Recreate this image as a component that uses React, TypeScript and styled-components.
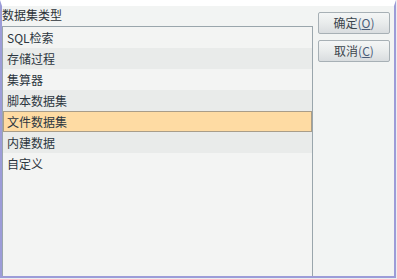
import React from "react";
import styled, { createGlobalStyle } from "styled-components";

const GlobalStyle = createGlobalStyle`
  html, body {
    margin: 0;
    padding: 0;
    background: #ecedf0;
  }
  body {
    font-family: "Noto Sans CJK SC", "Liberation Sans", sans-serif;
  }
`;

const Frame = styled.div`
  box-sizing: border-box;
  width: 396px;
  height: 278px;
  border-left: 2px solid #9c9cd8;
  border-right: 2px solid #9c9cd8;
  border-bottom: 2px solid #9c9cd8;
  border-top: 6px solid #ffffff;
  background: #f2f4f3;
  display: flex;
`;

const LeftColumn = styled.div`
  width: 311px;
  display: flex;
  flex-direction: column;
`;

const Label = styled.div`
  height: 20px;
  line-height: 18px;
  font-size: 12px;
  color: #2c3238;
  white-space: nowrap;
`;

const ListBox = styled.div`
  flex: 1;
  border-top: 1px solid #9aa6ac;
  border-left: 1px solid #9aa6ac;
  border-right: 1px solid #9aa6ac;
  background: #f3f4f3;
  display: flex;
  flex-direction: column;
`;

const Row = styled.div<{ $alt?: boolean; $selected?: boolean }>`
  box-sizing: border-box;
  height: 21px;
  padding-left: 3px;
  font-size: 12px;
  line-height: 19px;
  color: #2c3640;
  background: ${({ $alt, $selected }) =>
    $selected ? "#fedba3" : $alt ? "#e9ebea" : "#f3f4f3"};
  border: 1px solid ${({ $selected }) => ($selected ? "#a99d89" : "transparent")};
  white-space: nowrap;
`;

const RightColumn = styled.div`
  flex: 1;
  display: flex;
  flex-direction: column;
  gap: 6px;
  padding: 6px 0 0 5px;
`;

const Button = styled.div`
  box-sizing: border-box;
  width: 72px;
  height: 22px;
  border: 1px solid #a7b0b5;
  border-radius: 2px;
  background: linear-gradient(to bottom, #f4f6f6 0%, #e9ecec 50%, #d9dddf 100%);
  font-size: 12px;
  line-height: 20px;
  text-align: center;
  color: #3a444c;
  white-space: nowrap;
`;

const Mnemonic = styled.span`
  color: #4a5c78;
  u {
    text-decoration: underline;
  }
`;

const items = ["SQL检索", "存储过程", "集算器", "脚本数据集", "文件数据集", "内建数据", "自定义"];
const selectedIndex = 4;

const App: React.FC = () => {
  return (
    <>
      <GlobalStyle />
      <Frame>
        <LeftColumn>
          <Label>数据集类型</Label>
          <ListBox>
            {items.map((item, i) => (
              <Row key={item} $alt={i % 2 === 1} $selected={i === selectedIndex}>
                {item}
              </Row>
            ))}
          </ListBox>
        </LeftColumn>
        <RightColumn>
          <Button>
            确定
            <Mnemonic>
              (<u>O</u>)
            </Mnemonic>
          </Button>
          <Button>
            取消
            <Mnemonic>
              (<u>C</u>)
            </Mnemonic>
          </Button>
        </RightColumn>
      </Frame>
    </>
  );
};

export default App;
